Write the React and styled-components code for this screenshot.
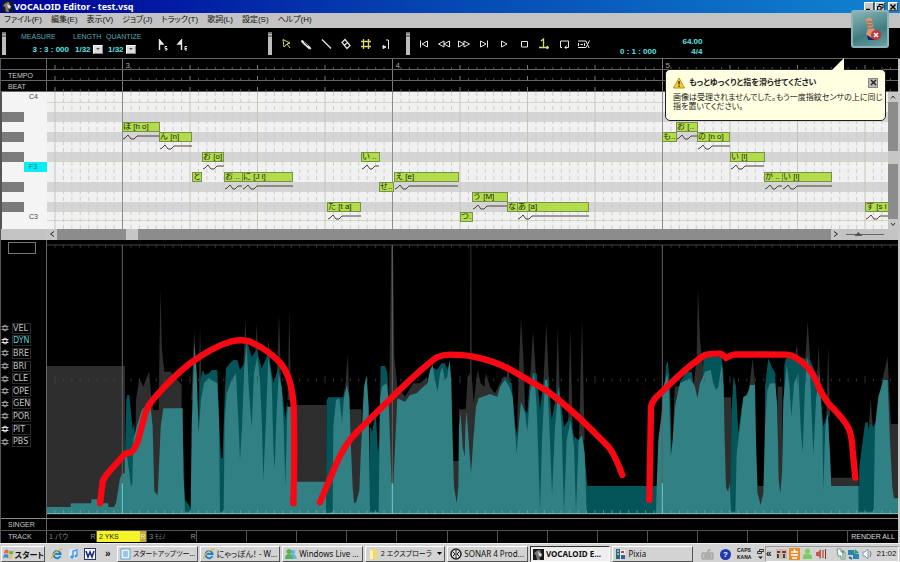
import React, { useState } from "react";
import styled, { createGlobalStyle } from "styled-components";

const CANVAS_LEFT = 47;
const BEAT = 67.5;
const ROW_SHARE = 10 / 137;

const menus = [
  "ファイル(F)",
  "編集(E)",
  "表示(V)",
  "ジョブ(J)",
  "トラック(T)",
  "歌詞(L)",
  "設定(S)",
  "ヘルプ(H)",
];

const params = ["VEL", "DYN", "BRE", "BRI", "CLE", "OPE", "GEN", "POR", "PIT", "PBS"];

// one entry per semitone from C4 down
const keys = [
  { name: "C4" },
  {},
  { black: true },
  {},
  { black: true },
  {},
  { black: true },
  { name: "F3", active: true },
  {},
  { black: true },
  {},
  { black: true },
  { name: "C3" },
  {},
];

const notes = [
  { text: "ほ [h o]", x: 122, w: 38, row: 3, curve: 38 },
  { text: "ん [n]", x: 159, w: 33, row: 4, curve: 33 },
  { text: "と", x: 192, w: 10, row: 8 },
  { text: "お [o]", x: 202, w: 22, row: 6, curve: 22 },
  { text: "お ..", x: 224, w: 19, row: 8, curve: 18 },
  { text: "に [J i]", x: 242, w: 51, row: 8, curve: 51 },
  { text: "た [t a]", x: 327, w: 34, row: 11, curve: 34 },
  { text: "い ..", x: 361, w: 19, row: 6, curve: 18 },
  { text: "せ..", x: 379, w: 15, row: 9 },
  { text: "え [e]", x: 394, w: 65, row: 8, curve: 64 },
  { text: "つ.", x: 460, w: 13, row: 12 },
  { text: "う [M]", x: 472, w: 36, row: 10, curve: 35 },
  { text: "な", x: 507, w: 11, row: 11 },
  { text: "あ [a]", x: 517, w: 72, row: 11, curve: 72 },
  { text: "も..", x: 662, w: 15, row: 4 },
  { text: "お [..", x: 676, w: 22, row: 3, curve: 21 },
  { text: "の [n o]", x: 697, w: 33, row: 4, curve: 33 },
  { text: "い [i]", x: 730, w: 35, row: 6, curve: 34 },
  { text: "が ..", x: 764, w: 19, row: 8, curve: 18 },
  { text: "い [i]", x: 782, w: 50, row: 8, curve: 50 },
  { text: "す [s i", x: 865, w: 34, row: 11, curve: 34 },
];

const ticks = Array.from({ length: 101 }, (_, i) => ({
  x: 55 + (i * BEAT) / 8 - CANVAS_LEFT,
  beat: i % 8 === 0,
  bar: i % 32 === 8,
}));

const bars = [
  { x: 75.5, name: "3" },
  { x: 345.5, name: "4" },
  { x: 615.5, name: "5" },
];

// curve shapes, three units to a pixel
const segments = [
  {
    x: 0,
    gray: [
      "141,820 141,378 375,378 375,820",
      "403,820 408,480 418,415 430,440 447,395 455,480 460,510 476,510 481,150 486,330 493,395 512,395 545,435 545,505 553,690 553,820",
      "574,480 583,270 591,480",
      "594,575 600,258 606,480",
      "728,420 736,240 744,420",
      "762,420 770,250 778,420",
      "798,400 806,300 814,420",
      "830,420 837,225 843,420",
      "863,480 868,212 873,480",
      "880,820 880,495 980,495 980,820",
    ],
    dark: [
      "375,820 375,640 379,480 382,465 388,465 398,570 403,545 412,820",
      "548,820 548,690 556,780 570,800 575,820",
      "590,820 600,430 608,390 615,405 628,400 635,390 652,390 657,540 663,655 668,655 672,520 678,385 690,370 700,360 712,360 720,390 733,370 740,300 755,350 770,330 785,385 805,340 820,430 836,380 850,480 856,540 862,480 866,820",
    ],
    teal: "141,820 141,801 212,801 212,790 274,790 274,778 300,778 300,790 325,790 325,801 342,801 348,790 360,715 367,700 374,700 374,640 380,640 388,700 393,740 397,730 400,600 410,560 425,510 440,495 452,500 458,560 463,755 473,765 476,700 482,560 490,505 548,505 550,700 555,815 572,815 575,560 583,310 590,400 596,575 603,480 612,430 625,415 652,430 657,540 660,815 671,815 674,540 680,460 695,420 708,400 716,560 720,660 726,560 733,380 740,310 746,440 755,565 762,400 772,350 780,420 786,560 790,720 797,560 805,350 815,420 820,620 824,690 828,560 836,400 845,440 851,560 856,740 862,500 888,500 888,725 980,725 980,820",
  },
  {
    x: 870,
    gray: [
      "166,440 173,345 178,470 178,508 215,508 215,820 178,820",
      "290,820 298,440 304,15 309,15 313,350 322,440 345,470 370,430 390,430 412,410 412,820",
      "487,820 487,663 507,663 507,508 527,508 533,410 540,400 541,15 544,15 545,400 551,490 558,430 563,390 572,430 583,440 588,400 600,440 615,460 640,410 650,410 654,350 659,420 670,820",
      "676,820 683,500 688,350 693,235 700,350 706,520 712,820",
      "720,420 729,275 739,420",
      "760,430 769,250 777,430",
      "797,480 803,265 810,480",
      "834,560 841,265 848,560",
      "867,600 876,240 884,600",
    ],
    dark: [
      "108,820 110,480 115,472 160,472 165,440 172,820",
      "236,820 240,560 247,575 252,540 258,530 264,640 268,600 272,378 285,378 292,400 296,480 300,820",
      "415,820 415,420 425,380 440,390 455,370 465,370 472,390 480,365 486,600 490,820",
      "625,820 630,440 645,412 665,430 676,560 685,600 693,485 705,510 712,520 718,440 728,400 740,400 750,510 760,430 775,410 785,540 806,430 822,560 842,530 852,590 866,600 880,600 892,738 960,738 960,820",
    ],
    teal: "110,820 128,815 130,560 138,480 148,475 156,545 162,475 170,435 178,470 182,600 188,740 192,788 198,788 208,750 214,600 222,440 230,405 236,500 240,815 266,815 270,480 275,440 290,430 296,480 300,600 305,730 310,730 316,600 322,475 345,485 360,465 380,460 395,445 412,430 420,390 428,375 435,420 443,455 450,400 457,380 465,420 472,410 479,360 484,430 488,600 492,740 500,790 505,740 507,560 512,520 518,620 524,650 526,560 530,515 536,600 543,700 550,600 558,500 566,475 600,462 622,470 630,440 645,420 658,440 668,470 674,560 680,640 686,560 693,485 705,520 712,575 720,460 732,395 740,500 750,810 756,600 765,420 772,420 780,600 786,765 795,560 806,440 815,560 822,815 830,600 842,540 852,620 858,815 866,600 876,585 884,640 890,820",
  },
  {
    x: 1770,
    gray: [
      "240,820 254,440 312,430 320,350 324,145 330,300 340,390 340,820",
      "402,820 402,472 423,472 423,820",
      "478,440 488,355 496,440",
      "503,820 503,738 522,738 522,820",
      "563,820 563,440 577,440 577,820",
      "612,380 620,312 628,380",
      "645,370 653,245 661,370",
      "680,440 686,315 691,440",
      "709,530 715,318 720,530",
      "724,820 724,713 806,713 806,820",
      "836,570 842,475 849,570",
      "875,430 893,350 896,420 903,552 926,552 926,820 875,820",
    ],
    dark: [
      "0,820 0,738 202,738 202,820",
      "215,820 222,470 228,375 233,362 240,430 248,820",
      "268,820 270,425 290,395 305,395 312,440",
      "330,820 340,360 350,350 395,350 400,400 402,820",
      "421,820 424,520 431,408 438,440 445,580 455,500 475,450 480,820",
      "525,820 525,440 535,355 545,380 556,400 560,820",
      "580,820 583,375 590,350 612,360 625,350 660,360 690,430 700,560 715,510 720,820",
      "806,820 808,680 825,550 833,545 836,570 842,550 850,560 860,540 860,820",
    ],
    teal: "198,820 200,738 205,600 215,520 220,440 232,400 238,470 242,650 248,600 255,500 265,450 270,430 300,415 315,440 322,475 330,430 345,395 362,390 370,430 378,450 385,440 395,370 401,440 404,600 408,740 414,755 420,730 423,815 436,815 440,640 450,560 460,470 472,465 480,435 495,435 498,600 503,760 512,795 520,760 525,560 532,450 540,430 556,430 562,500 566,720 571,760 576,700 580,480 590,375 598,430 604,530 612,430 625,400 632,560 638,640 645,440 652,350 660,400 670,645 678,480 688,400 697,560 700,750 706,560 713,520 720,640 724,738 806,738 806,815 851,815 855,560 865,470 880,420 893,420 900,600 907,740 912,775 926,775 926,820",
  },
];

const phrases = [
  "M300,790 L308,725 Q314,708 330,692 L372,645 Q380,637 392,638 Q402,632 413,605 L436,520 Q442,496 470,466 Q520,410 570,370 Q640,320 695,304 Q720,298 745,303 Q800,325 840,368 Q876,410 881,500 Q885,640 880,790",
  "M960,787 L1005,680 Q1032,615 1070,577 L1180,468 Q1260,390 1310,352 Q1330,344 1350,344 Q1390,344 1420,350 Q1480,362 1530,388 L1640,452 Q1710,504 1770,565 L1827,622 Q1845,645 1867,705",
  "M1948,780 L1953,500 Q1956,485 1970,470 L2020,422 Q2075,370 2115,345 Q2128,340 2162,341 Q2170,344 2178,354 Q2192,344 2205,343 L2360,344 Q2376,345 2392,356 Q2430,380 2450,425 Q2462,460 2490,496 Q2530,535 2546,565 Q2556,590 2558,630 L2566,713",
];

const tasks = [
  { icon: "doc", text: "スタートアップツー...", small: true },
  { icon: "ie", text: "にゃっぽん！ - W..." },
  { icon: "people", text: "Windows Live ..." },
  { icon: "folder", text: "2 エクスプローラ", more: true, small: true },
  { icon: "sonar", text: "SONAR 4 Prod..." },
  { icon: "voc", text: "VOCALOID E...", active: true },
  { icon: "pixia", text: "Pixia" },
];

const GlobalStyle = createGlobalStyle`
  * {
    box-sizing: border-box;
  }
  body {
    margin: 0;
    background: #000;
    font-family: "Liberation Sans", "Noto Sans CJK JP", sans-serif;
    font-size: 8px;
  }
  button, select, input {
    margin: 0;
    padding: 0;
    border: 0;
    border-radius: 0;
    background: none;
    font: inherit;
    color: inherit;
  }
`;

const Icon = ({ name }) => {
  switch (name) {
    case "voc":
      return (
        <svg width="11" height="11" viewBox="0 0 11 11">
          <rect width="11" height="11" fill="#181818" />
          <path d="M1 5 Q3 1 7 1 L8 4 L6 5 L7 11 H4 L3 6 Z" fill="#777" />
          <path d="M5 3 L9 5 L8 8 L6 7Z" fill="#d8d8d8" />
        </svg>
      );
    case "ie":
      return (
        <svg width="12" height="12" viewBox="0 0 12 12">
          <path d="M9.4 8 A3.6 3.6 0 1 1 9.6 6 H3" fill="none" stroke="#1c86c8" strokeWidth="2" />
          <path d="M1 11 Q0 8 5 4 Q10 0 11.500 1.500" fill="none" stroke="#e4b93c" strokeWidth="1.200" />
        </svg>
      );
    case "doc":
      return (
        <svg width="11" height="12" viewBox="0 0 11 12">
          <rect x="1" y="1" width="9" height="10" fill="#e8f4fc" stroke="#6aa5d0" />
          <path d="M3 4H8M3 6H8M3 8H8" stroke="#5c96c8" />
        </svg>
      );
    case "people":
      return (
        <svg width="12" height="12" viewBox="0 0 12 12">
          <circle cx="8" cy="4" r="2.300" fill="#68b5e0" />
          <path d="M5 11Q5 6 8 6T12 11Z" fill="#68b5e0" />
          <circle cx="4" cy="3.500" r="2.500" fill="#55b060" />
          <path d="M0 11Q0 6 4 6T8 11Z" fill="#55b060" />
        </svg>
      );
    case "folder":
      return (
        <svg width="11" height="12" viewBox="0 0 11 12">
          <path d="M2 1H7L9 3V11H2Z" fill="#f4d868" />
          <path d="M2 1V11L5 11V3Z" fill="#fff3ab" />
        </svg>
      );
    case "sonar":
      return (
        <svg width="12" height="12" viewBox="0 0 12 12">
          <circle cx="6" cy="6" r="5" fill="#ddd" stroke="#222" strokeWidth="1.500" />
          <path d="M6 2V10M3 4L5 6L3 8M9 4L7 6L9 8" fill="none" stroke="#222" />
        </svg>
      );
    case "pixia":
      return (
        <svg width="11" height="12" viewBox="0 0 11 12">
          <path d="M1 1H5V11H1Z" fill="#256c78" />
          <path d="M5 2H10V10H5Z" fill="#f0eee8" />
          <path d="M6 3H9V5H6Z" fill="#b54848" />
          <path d="M6 7H10V11H6Z" fill="#365ca0" />
          <path d="M2 3H4M2 6H4" stroke="#fff" />
        </svg>
      );
    case "note":
      return (
        <svg width="11" height="12" viewBox="0 0 11 12">
          <rect x="1" y="1" width="9" height="10" rx="2" fill="#dcecf8" />
          <path d="M5 9V3L9 2V8" fill="none" stroke="#4c9ae0" strokeWidth="1.500" />
          <circle cx="4" cy="9" r="1.800" fill="#4c9ae0" />
          <circle cx="8" cy="8" r="1.500" fill="#4c9ae0" />
        </svg>
      );
    case "word":
      return (
        <svg width="12" height="12" viewBox="0 0 12 12">
          <rect x="0.500" y="0.500" width="11" height="11" fill="#fff" stroke="#243478" />
          <path d="M2 3L4 9L6 4L8 9L10 3" fill="none" stroke="#182a80" strokeWidth="1.600" />
        </svg>
      );
    default:
      return null;
  }
};

const Glyph = ({ children, color = "#e8e8e8" }) => (
  <svg width="14" height="12" viewBox="0 0 14 12" fill="none" stroke={color}>
    {children}
  </svg>
);

const tools = [
  ["矢印", <Glyph color="#d9d970"><path d="M4 1.500L11 5L8 6L11 10M4 1.500L5 9L8 6" /></Glyph>],
  ["鉛筆", <Glyph><path d="M3 2L11 9L12 11L9.500 10.500L2.500 4Z" fill="#e8e8e8" strokeWidth="0.800" /><path d="M5 4L9 8" stroke="#555" /></Glyph>],
  ["直線", <Glyph><path d="M3 1.500L12 10.500" strokeWidth="1.200" /></Glyph>],
  ["消しゴム", <Glyph><path d="M3 4.500L6 1.500L11 7.500L8 10.500ZM5.500 7L9 4.500" strokeWidth="1.200" /></Glyph>],
  ["グリッド", <Glyph color="#d9d970"><path d="M4.500 1V11M9.500 1V11M2 3.500H12M2 8.500H12" strokeWidth="1.300" /></Glyph>],
  ["音符", <Glyph><path d="M7 2H9.500V11" /><path d="M4 7.500L7 9L4 10.500Z" fill="#e8e8e8" /></Glyph>],
];

const transport = [
  ["先頭", <Glyph><path d="M3.500 2.500V9.500M10.500 3V9L5 6Z" /></Glyph>],
  ["巻き戻し", <Glyph><path d="M7 3V9L1.500 6ZM12.500 3V9L7 6Z" /></Glyph>],
  ["早送り", <Glyph><path d="M1.500 3V9L7 6ZM7 3V9L12.500 6Z" /></Glyph>],
  ["末尾", <Glyph><path d="M10.500 2.500V9.500M3.500 3V9L9 6Z" /></Glyph>],
  ["再生", <Glyph><path d="M4.500 3V9L10 6Z" /></Glyph>],
  ["停止", <Glyph><path d="M4.500 3.500H10.500V9H4.500Z" /></Glyph>],
  ["追従", <Glyph color="#d9d970"><path d="M4 3L6.500 1V10M2 9.500H11" strokeWidth="1.300" /><path d="M10 8L12 9.500L10 11Z" fill="#d9d970" /></Glyph>],
  ["ループ", <Glyph><path d="M5 9.500H3.500V3H11.500V9.500H8M9.500 7.500L8 9.500L9.500 11" /></Glyph>],
  ["範囲", <Glyph><path d="M1 3H9L12 10M1 9.500H9L12.500 2.500M1.500 5V8M3.500 6.500H6M7.500 5V8" /></Glyph>],
];

export default function App() {
  const [param, setParam] = useState("DYN");
  const [balloon, setBalloon] = useState(true);

  return (
    <>
      <GlobalStyle />
      <Page>
        <TitleBar>
          <Icon name="voc" />
          <Title>VOCALOID Editor - test.vsq</Title>
          <WindowButton type="button" aria-label="最小化">
            <svg width="8" height="8"><path d="M1 6.500H5" stroke="#000" strokeWidth="1.500" /></svg>
          </WindowButton>
          <WindowButton type="button" aria-label="元に戻す">
            <svg width="8" height="8"><path d="M3 3V1.500H7V5H5M1.500 3.500H5V7H1.500Z" fill="none" stroke="#000" /></svg>
          </WindowButton>
          <WindowButton type="button" aria-label="閉じる" $spaced>
            <svg width="8" height="8"><path d="M1.500 1.500L6.500 6.500M6.500 1.500L1.500 6.500" stroke="#000" strokeWidth="1.500" /></svg>
          </WindowButton>
        </TitleBar>

        <MenuBar>
          {menus.map((menu) => (
            <MenuItem type="button" key={menu}>
              {menu}
            </MenuItem>
          ))}
        </MenuBar>

        <Toolbar>
          <Handle />
          <PositionPanel>
            <Field $width={52}>
              <Caption>MEASURE</Caption>
              <Digits>3 : 3 : 000</Digits>
            </Field>
            <Field as="label" $width={33}>
              <Caption>LENGTH</Caption>
              <Combo />
            </Field>
            <Field as="label" $width={35}>
              <Caption>QUANTIZE</Caption>
              <Combo />
            </Field>
            <FlagButtons>
              <ToolButton type="button" aria-label="開始位置">
                <Glyph><path d="M4.500 11V1L8 5H5" fill="#fff" strokeWidth="1.400" /><path d="M12 7.500H10V9.500H12V11H10" /></Glyph>
              </ToolButton>
              <ToolButton type="button" aria-label="終了位置">
                <Glyph><path d="M6.500 11V1L3 5H6" fill="#fff" strokeWidth="1.400" /><path d="M12 11H10V7.500H12M10 9.500H12" /></Glyph>
              </ToolButton>
            </FlagButtons>
          </PositionPanel>
          <Handle />
          <ToolGroup $width={134}>
            {tools.map(([label, glyph]) => (
              <ToolButton type="button" key={label} aria-label={label}>
                {glyph}
              </ToolButton>
            ))}
          </ToolGroup>
          <Handle />
          <ToolGroup $width={210}>
            {transport.map(([label, glyph]) => (
              <ToolButton type="button" key={label} aria-label={label}>
                {glyph}
              </ToolButton>
            ))}
          </ToolGroup>
          <Readout>0 : 1 : 000</Readout>
          <Tempo>
            <span>64.00</span>
            <span>4/4</span>
          </Tempo>
        </Toolbar>

        <Editor>
          <Ruler label="" numbers />
          <Ruler label="TEMPO" />
          <Ruler label="BEAT" />

          <Roll>
            <Keyboard>
              {keys.map((key, i) => (
                <Key key={i}>
                  <KeyFront $black={key.black} />
                  <KeyName $active={key.active}>{key.name}</KeyName>
                </Key>
              ))}
            </Keyboard>
            <Canvas>
              <Lanes>
                {keys.map((key, i) => (
                  <Lane key={i} $black={key.black} />
                ))}
              </Lanes>
              <CanvasDrawing>
                <path d="M0 10H842M0 69H842M0 128H842" transform="translate(0 0.500)" stroke="#d3d6c0" />
                {ticks.map((t) => (
                  <line
                    key={t.x}
                    x1={t.x}
                    x2={t.x}
                    y1="0"
                    y2="137"
                    stroke={t.bar ? "#8d8d8d" : t.beat ? "#c4c7b6" : "#cecece"}
                    strokeDasharray={t.beat ? "none" : "4 3"}
                  />
                ))}
              </CanvasDrawing>
              {notes.map((note) => (
                <NoteSlot key={note.x} $x={note.x - CANVAS_LEFT} $row={note.row}>
                  <Note type="button" $width={note.w}>
                    {note.text}
                  </Note>
                  {note.curve && (
                    <svg width={note.curve} height="9" viewBox={`0 0 ${note.curve} 9`}>
                      <path
                        d={
                          note.curve < 20
                            ? `M1 7L3 6L6 3L9 7H11L14 4H${note.curve}`
                            : `M1 7L3 6L6 3L9 7H12L15 4H${note.curve}`
                        }
                        fill="none"
                        stroke="#4c4038"
                      />
                    </svg>
                  )}
                </NoteSlot>
              ))}
            </Canvas>
            <VerticalScroll>
              <ScrollButton type="button" aria-label="上へ">
                <svg width="8" height="8"><path d="M2 5.500L4 3L6 5.500" fill="none" stroke="#333" /></svg>
              </ScrollButton>
              <VerticalTrack>
                <VerticalThumb />
              </VerticalTrack>
              <ScrollButton type="button" aria-label="下へ">
                <svg width="8" height="8"><path d="M2 3L4 5.500L6 3" fill="none" stroke="#333" /></svg>
              </ScrollButton>
            </VerticalScroll>
          </Roll>

          <HorizontalScroll>
            <ScrollButton type="button" aria-label="左へ">
              <svg width="8" height="8"><path d="M6 1.500L2.500 4L6 6.500" fill="none" stroke="#222" /></svg>
            </ScrollButton>
            <HorizontalTrack>
              <HorizontalThumb />
            </HorizontalTrack>
            <ScrollButton type="button" aria-label="右へ">
              <svg width="8" height="8"><path d="M2 1.500L5.500 4L2 6.500" fill="none" stroke="#222" /></svg>
            </ScrollButton>
            <Zoom type="range" aria-label="ズーム" defaultValue="28" />
          </HorizontalScroll>

          <Control>
            <ParamColumn>
              <ValueBox />
              <ParamList>
                {params.map((name) => (
                  <ParamRow key={name}>
                    <svg width="8" height="8" fill="none" stroke={name === "DYN" || name === "PIT" ? "#ddd" : "#999"}>
                      <path d="M0.500 2.500H7.500M0.500 5.500H7.500" />
                      <ellipse cx="4" cy="4" rx="2" ry="3" />
                    </svg>
                    <ParamButton type="button" $active={param === name} onClick={() => setParam(name)}>
                      {name}
                    </ParamButton>
                  </ParamRow>
                ))}
              </ParamList>
            </ParamColumn>
            <ControlChart />
          </Control>

          <SingerRow>
            <RowLabel>SINGER</RowLabel>
          </SingerRow>
          <TrackRow>
            <RowLabel>TRACK</RowLabel>
            <Tracks>
              <Track type="button">1 パウ<b>R</b></Track>
              <Track type="button" $active>2 YKS<b>R</b></Track>
              <Track type="button">3 ﾓﾐﾉ<b>R</b></Track>
              {Array.from({ length: 13 }, (_, i) => (
                <Track type="button" key={i} aria-label={`トラック ${i + 4}`} />
              ))}
            </Tracks>
            <RenderAll type="button">RENDER ALL</RenderAll>
          </TrackRow>
        </Editor>

        <Taskbar>
          <StartButton type="button">
            <svg width="12" height="12" viewBox="0 0 12 12">
              <path d="M2 2Q4 0 6 2V6Q4 4 1 6Z" fill="#e06a38" />
              <path d="M7 2Q9 4 12 2L11 6Q9 7 7 6Z" fill="#68b040" />
              <path d="M1 7Q4 5 6 7V11Q3 9 0 11Z" fill="#4888d8" />
              <path d="M7 7Q9 8 11 7L10 11Q8 12 7 11Z" fill="#ecc440" />
            </svg>
            スタート
          </StartButton>
          <QuickLaunch>
            <Icon name="ie" />
            <Icon name="note" />
            <Icon name="word" />
            <span>»</span>
          </QuickLaunch>
          <TaskList>
            {tasks.map((task) => (
              <Task type="button" key={task.text} $active={task.active} $small={task.small}>
                <Icon name={task.icon} />
                <span>{task.text}</span>
                {task.more && <svg width="5" height="4"><path d="M0 0H5L2.500 3Z" /></svg>}
              </Task>
            ))}
          </TaskList>
          <LanguageBar>
            <svg width="13" height="12" viewBox="0 0 13 12">
              <path d="M1 5H12V11H1ZM3 7H10M3 9H10M7 5V2H10" fill="#c4c4c4" stroke="#999" />
            </svg>
            <Help>?</Help>
            <CapsKana>
              <span>CAPS</span>
              <span>KANA</span>
            </CapsKana>
            <svg width="7" height="12" viewBox="0 0 7 12">
              <path d="M2.500 3.500V1.500H6.500V3.500ZM0.500 3.500H4.500V5.500H0.500Z" fill="none" stroke="#333" />
              <path d="M1 8.500H6L3.500 11Z" fill="#222" />
            </svg>
          </LanguageBar>
          <Tray>
            <Chevrons>«</Chevrons>
            <svg width="11" height="12" viewBox="0 0 11 12">
              <rect y="1" width="11" height="10" fill="#cbb8ae" />
              <path d="M1 3H4V5H1ZM6 3H10V5H6Z" fill="#8a3030" />
              <path d="M2 6V10M8 6V10" stroke="#444" strokeWidth="2" />
            </svg>
            <svg width="11" height="12" viewBox="0 0 11 12">
              <rect width="11" height="12" fill="#ec8a28" />
              <path d="M2 4H9M5.500 1V5M2 7H9M3 10H8" stroke="#fff" strokeWidth="1.500" />
            </svg>
            <svg width="11" height="12" viewBox="0 0 11 12">
              <circle cx="5.500" cy="3" r="2.500" fill="#80cc60" />
              <path d="M1 11Q0 5 5.500 5.500T10 11Z" fill="#80cc60" />
            </svg>
            <svg width="12" height="12" viewBox="0 0 12 12">
              <path d="M1 4H3L6 1V11L3 8H1Z" fill="#c85848" />
              <path d="M8 2V10M10.500 1V11" stroke="#8c3028" />
            </svg>
            <Gap />
            <svg width="10" height="12" viewBox="0 0 10 12">
              <path d="M1 1H5V4H9V11H5V8H2Z" fill="#f8fff8" stroke="#6a9a80" />
              <path d="M7 2V10" stroke="#208858" />
            </svg>
            <svg width="12" height="12" viewBox="0 0 12 12">
              <path d="M0 2H6V7H0ZM5 6H11V11H5Z" fill="#2b83b0" />
              <path d="M7 1L11 5L6 6Z" fill="#1ba070" />
              <path d="M1 9L4 11" stroke="#186890" strokeWidth="2" />
            </svg>
            <svg width="11" height="12" viewBox="0 0 11 12">
              <path d="M1 4H3L6 1V11L3 8H1Z" fill="#fafafa" stroke="#80a0b0" />
              <path d="M8 3Q10 6 8 9" fill="none" stroke="#608090" />
            </svg>
            <Clock>21:02</Clock>
          </Tray>
        </Taskbar>

        <FingerButton type="button" aria-label="指紋センサ">
          <svg width="30" height="30" viewBox="0 0 30 30">
            <path d="M11 5Q14 2 17 5L18 14L21 17L19 24L14 25L11 20L13 15Z" fill="#d29a72" />
            <path d="M12 8H17M12 11H17M13 14H18" stroke="#8e5840" />
            <path d="M12 21L20 26H13Z" fill="#20265c" />
            <circle cx="21" cy="21" r="5" fill="#c43438" />
            <path d="M19 19L23 23M23 19L19 23" stroke="#fff" strokeWidth="1.600" />
          </svg>
        </FingerButton>

        {balloon && (
          <Balloon role="status">
            <BalloonTail width="13" height="13" viewBox="0 0 13 13">
              <path d="M0 12L12 0V13H0Z" fill="#ffffe1" />
            </BalloonTail>
            <BalloonHead>
              <svg width="12" height="12" viewBox="0 0 12 12">
                <path d="M6 1L11.500 11H0.500Z" fill="#f8cc30" stroke="#c09018" />
                <path d="M6 4V7.500M6 8.500V10" stroke="#222" strokeWidth="1.300" />
              </svg>
              <strong>もっとゆっくりと指を滑らせてください</strong>
              <BalloonClose type="button" aria-label="閉じる" onClick={() => setBalloon(false)}>
                <svg width="7" height="7"><path d="M1 1L6 6M6 1L1 6" stroke="#222" strokeWidth="1.400" /></svg>
              </BalloonClose>
            </BalloonHead>
            <BalloonText>
              画像は受理されませんでした。もう一度指紋センサの上に同じ
              <br />
              指を置いてください。
            </BalloonText>
          </Balloon>
        )}
      </Page>
    </>
  );
}

const Combo = () => (
  <ComboBox>
    <select defaultValue="1/32">
      <option>1/8</option>
      <option>1/16</option>
      <option>1/32</option>
    </select>
    <ComboArrow>
      <svg width="4" height="3"><path d="M0 0H4L2 2Z" fill="#555" /></svg>
    </ComboArrow>
  </ComboBox>
);

const Ruler = ({ label, numbers }) => (
  <RulerRow>
    <RowLabel>{label}</RowLabel>
    <RulerScale>
      <svg width="100%" height="10">
        {ticks.map((t) => (
          <line
            key={t.x}
            x1={t.x}
            x2={t.x}
            y1={t.bar ? 0 : t.beat ? 6 : 8}
            y2="11"
            stroke={t.bar || t.beat ? "#7a7a7a" : "#505050"}
          />
        ))}
        {numbers &&
          bars.map((bar) => (
            <text key={bar.name} x={bar.x + 3} y="9" fontSize="8" fill="#a8a8a8">
              {bar.name}
            </text>
          ))}
      </svg>
    </RulerScale>
  </RulerRow>
);

const ControlChart = () => (
  <ChartSvg viewBox="141 0 2553 834" preserveAspectRatio="none">
    {segments.map((s) => (
      <g key={s.x} transform={`translate(${s.x} 0)`}>
        {s.gray.map((points) => (
          <polygon key={points} points={points} fill="#2e2e2e" />
        ))}
        {s.dark.map((points) => (
          <polygon key={points} points={points} fill="#04555a" />
        ))}
        <polygon points={s.teal} fill="#318083" />
      </g>
    ))}
    <path d="M141 15H2694" stroke="#444" strokeWidth="3" />
    {ticks.map((t) => {
      const x = (t.x + CANVAS_LEFT) * 3;
      return (
        <g key={x} stroke="#484848" strokeWidth="2">
          <path d={`M${x} 15V25M${x} ${t.beat ? 408 : 415}V${t.beat ? 430 : 424}`} />
          <path d={`M${x} 811V820`} stroke="#76b8ba" />
        </g>
      );
    })}
    {[367, 1177, 1987].map((x) => (
      <g key={x} strokeWidth="3">
        <path d={`M${x} 15V730`} stroke="#626262" />
        <path d={`M${x} 730V820`} stroke="#70c8ca" />
      </g>
    ))}
    <path d="M141 821H2694" stroke="#8ccaca" strokeWidth="3" />
    {phrases.map((d) => (
      <path key={d} d={d} fill="none" stroke="#f90814" strokeWidth="19" strokeLinecap="round" strokeLinejoin="round" />
    ))}
  </ChartSvg>
);

const Page = styled.div`
  position: relative;
  display: flex;
  flex-direction: column;
  min-height: 100vh;
  overflow: hidden;
  background: #000;
`;

const TitleBar = styled.header`
  display: flex;
  align-items: center;
  height: 13px;
  padding: 0 2px;
  background: linear-gradient(90deg, #00009a, #0442b0 45%, #1084d0);
  color: #fff;
`;

const Title = styled.h1`
  flex: 1;
  margin: 0 0 0 1px;
  font-family: "Noto Sans", sans-serif;
  font-size: 9px;
  line-height: 13px;
`;

const WindowButton = styled.button`
  display: flex;
  align-items: center;
  justify-content: center;
  width: 10px;
  height: 9px;
  margin-left: ${(p) => (p.$spaced ? "3px" : "1px")};
  background: #c8c8c8;
  border: 1px solid;
  border-color: #fff #444 #444 #fff;
`;

const MenuBar = styled.nav`
  display: flex;
  align-items: center;
  gap: 9px;
  height: 15px;
  padding: 0 4px 2px;
  background: #c3c3c3;
`;

const MenuItem = styled.button`
  font-size: 8px;
  line-height: 12px;
  color: #111;
  font-feature-settings: "palt";
  white-space: nowrap;
`;

const Toolbar = styled.div`
  display: flex;
  height: 31px;
  padding: 4px 2px 1px;
  border-bottom: 1px solid #666;
  color: #5fe0e4;
`;

const Handle = styled.div`
  flex: none;
  width: 4px;
  margin-bottom: 2px;
  background: #bdbdbd;
  border-top: 5px double #777;
`;

const PositionPanel = styled.div`
  display: flex;
  flex: none;
  width: 262px;
  padding-left: 15px;
`;

const Field = styled.div`
  display: flex;
  flex-direction: column;
  width: ${(p) => p.$width}px;
`;

const Caption = styled.span`
  font-size: 7px;
  line-height: 10px;
  color: #58a9b4;
  white-space: nowrap;
`;

const Digits = styled.span`
  padding-right: 4px;
  font-size: 8px;
  font-weight: bold;
  line-height: 15px;
  text-align: right;
  white-space: nowrap;
`;

const ComboBox = styled.span`
  position: relative;
  display: block;
  width: 30px;
  height: 15px;

  select {
    width: 30px;
    height: 15px;
    padding-left: 2px;
    appearance: none;
    font-size: 8px;
    font-weight: bold;
    line-height: 15px;
  }
`;

const ComboArrow = styled.span`
  position: absolute;
  top: 3px;
  right: 0;
  display: flex;
  align-items: center;
  justify-content: center;
  width: 10px;
  height: 9px;
  background: #dcdcdc;
  border: 1px solid;
  border-color: #fff #888 #888 #fff;
  pointer-events: none;
`;

const FlagButtons = styled.div`
  display: flex;
  align-items: center;
  padding-left: 11px;
`;

const ToolGroup = styled.div`
  display: flex;
  flex: none;
  align-items: center;
  width: ${(p) => p.$width}px;
  padding: 0 0 2px 4px;
`;

const ToolButton = styled.button`
  display: flex;
  align-items: center;
  justify-content: center;
  width: 20px;
  height: 20px;
`;

const Readout = styled.span`
  align-self: flex-end;
  font-size: 8px;
  font-weight: bold;
  line-height: 10px;
  white-space: nowrap;
`;

const Tempo = styled.div`
  display: flex;
  flex-direction: column;
  justify-content: flex-end;
  width: 46px;
  font-size: 8px;
  font-weight: bold;
  line-height: 10px;
  text-align: right;
`;

const Editor = styled.main`
  display: flex;
  flex: 1;
  flex-direction: column;
  border-right: 2px solid #c8c8c8;
  border-left: 1px solid #555;
`;

const RowLabel = styled.div`
  flex: none;
  width: 46px;
  padding-left: 7px;
  border-right: 1px solid #666;
  font-size: 7px;
  line-height: 11px;
  color: #c8c8c8;
`;

const RulerRow = styled.div`
  display: flex;
  height: 11px;
  border-bottom: 1px solid #666;
`;

const RulerScale = styled.div`
  flex: 1;
  overflow: hidden;

  svg {
    display: block;
  }
`;

const Roll = styled.section`
  display: flex;
  height: 137px;
`;

const lanes = `
  display: grid;
  grid-template-rows: repeat(13, 10fr) 7fr;
`;

const Keyboard = styled.div`
  ${lanes}
  flex: none;
  width: 46px;
  background: #f4f4f4;
  border-left: 1px solid #555;
`;

const Key = styled.div`
  display: flex;
  min-height: 0;
`;

const KeyFront = styled.div`
  width: 22px;
  background: ${(p) => (p.$black ? "#7b7b7b" : "transparent")};
`;

const KeyName = styled.div`
  flex: 1;
  padding-left: 5px;
  background: ${(p) => (p.$active ? "#0cecf4" : "transparent")};
  font-size: 7px;
  line-height: 9px;
  color: ${(p) => (p.$active ? "#25808c" : "#444")};
`;

const Canvas = styled.div`
  position: relative;
  flex: 1;
  min-width: 0;
  overflow: hidden;
`;

const Lanes = styled.div`
  ${lanes}
  height: 100%;
`;

const Lane = styled.div`
  background: ${(p) => (p.$black ? "#d5d5d5" : "#f1f1f1")};
`;

const CanvasDrawing = styled.svg`
  position: absolute;
  inset: 0;
  width: 100%;
  height: 100%;
`;

const NoteSlot = styled.div`
  position: absolute;
  top: ${(p) => p.$row * ROW_SHARE * 100}%;
  left: ${(p) => p.$x}px;

  svg {
    display: block;
  }
`;

const Note = styled.button`
  display: block;
  width: ${(p) => p.$width}px;
  height: 10px;
  overflow: hidden;
  background: #b2dc4c;
  border: 1px solid #75914a;
  font-size: 8px;
  line-height: 8px;
  color: #1c2810;
  text-align: left;
  white-space: nowrap;
`;

const VerticalScroll = styled.div`
  display: flex;
  flex: none;
  flex-direction: column;
  width: 10px;
  background: #8c8c8c;
`;

const ScrollButton = styled.button`
  display: flex;
  flex: none;
  align-items: center;
  justify-content: center;
  width: 10px;
  height: 10px;
  background: #c6c6c6;
`;

const VerticalTrack = styled.div`
  flex: 1;
  padding-top: 49px;
`;

const VerticalThumb = styled.div`
  height: 13px;
  background: #c6c6c6;
`;

const HorizontalScroll = styled.div`
  display: flex;
  height: 11px;
  padding-left: 46px;
  background: #c3c3c3;
`;

const HorizontalTrack = styled.div`
  flex: 1;
  padding-left: 69px;
  background: #8c8c8c;
`;

const HorizontalThumb = styled.div`
  width: 12px;
  height: 11px;
  background: #c6c6c6;
`;

const Zoom = styled.input`
  width: 57px;
  height: 11px;
  padding: 0 14px 0 5px;
  appearance: none;

  &::-webkit-slider-runnable-track {
    height: 1px;
    background: #666;
  }
  &::-webkit-slider-thumb {
    width: 8px;
    height: 4px;
    margin-top: -2px;
    appearance: none;
    background: #555;
    clip-path: polygon(50% 0, 100% 100%, 0 100%);
  }
`;

const Control = styled.section`
  display: flex;
  flex: 1;
  min-height: 278px;
`;

const ParamColumn = styled.div`
  flex: none;
  width: 46px;
  border-right: 1px solid #666;
`;

const ValueBox = styled.div`
  width: 28px;
  height: 12px;
  margin: 2px 0 68px 7px;
  border: 1px solid #777;
`;

const ParamList = styled.div`
  display: grid;
  grid-template-rows: repeat(10, 1fr);
  height: 126px;
`;

const ParamRow = styled.div`
  display: flex;
  align-items: center;
  gap: 3px;
`;

const ParamButton = styled.button`
  width: 19px;
  height: 11px;
  border: 1px solid #2c2c2c;
  font-family: "DejaVu Sans", sans-serif;
  font-size: 8px;
  line-height: 9px;
  color: ${(p) => (p.$active ? "#5cc8c8" : "#c4c4c4")};
  text-align: left;
`;

const ChartSvg = styled.svg`
  flex: 1;
  min-width: 0;
  height: auto;
  align-self: stretch;
`;

const SingerRow = styled.div`
  display: flex;
  height: 12px;
  border-top: 1px solid #888;
`;

const TrackRow = styled.div`
  display: flex;
  height: 13px;
  border-top: 1px solid #555;
`;

const Tracks = styled.div`
  display: grid;
  flex: 1;
  grid-template-columns: repeat(16, 1fr);
`;

const Track = styled.button`
  display: flex;
  justify-content: space-between;
  min-width: 0;
  height: 11px;
  padding-left: 2px;
  background: ${(p) => (p.$active ? "#f4f428" : "transparent")};
  border-right: 1px solid #555;
  font-size: 7px;
  line-height: 11px;
  color: ${(p) => (p.$active ? "#222" : "#888")};

  b {
    width: 6px;
    background: ${(p) => (p.$active ? "#c4a840" : "transparent")};
    font-weight: normal;
    color: ${(p) => (p.$active ? "#f4ecb0" : "#999")};
  }
`;

const RenderAll = styled.button`
  width: 50px;
  height: 11px;
  font-size: 7px;
  line-height: 11px;
  color: #ddd;
  white-space: nowrap;
`;

const Taskbar = styled.footer`
  display: flex;
  align-items: center;
  height: 20px;
  padding: 2px 1px 1px;
  background: #d3d3d3;
  border-top: 1px solid #eee;
  color: #111;
`;

const bevel = `
  border: 1px solid;
  border-color: #fff #555 #555 #fff;
`;

const StartButton = styled.button`
  ${bevel}
  display: flex;
  flex: none;
  align-items: center;
  gap: 1px;
  width: 44px;
  height: 16px;
  padding-left: 1px;
  font-feature-settings: "palt";
  font-weight: bold;
  white-space: nowrap;
`;

const QuickLaunch = styled.div`
  display: flex;
  flex: none;
  align-items: center;
  gap: 5px;
  width: 72px;
  padding-left: 6px;

  span {
    margin-left: 4px;
    font-size: 10px;
    font-weight: bold;
    line-height: 12px;
  }
`;

const TaskList = styled.div`
  display: flex;
  flex: 1;
  gap: 2px;
  min-width: 0;
`;

const Task = styled.button`
  ${bevel}
  display: flex;
  flex: 1 1 0;
  align-items: center;
  gap: 2px;
  min-width: 0;
  height: 16px;
  padding: 0 2px;
  background: ${(p) => (p.$active ? "#eee" : "transparent")};
  border-color: ${(p) => (p.$active ? "#333 #fff #fff #333" : "#fff #555 #555 #fff")};
  font-feature-settings: "palt";
  font-family: "Noto Sans", "Noto Sans CJK JP", sans-serif;
  font-size: ${(p) => (p.$small ? "7px" : "8px")};
  font-weight: ${(p) => (p.$active ? "bold" : "normal")};
  line-height: 12px;
  white-space: nowrap;

  svg {
    flex: none;
  }
  span {
    flex: 1;
    overflow: hidden;
    text-align: left;
  }
`;

const LanguageBar = styled.div`
  display: flex;
  flex: none;
  align-items: center;
  gap: 6px;
  width: 72px;
  padding-left: 8px;
`;

const Help = styled.span`
  width: 11px;
  height: 11px;
  background: #2038b0;
  border-radius: 50%;
  font-size: 8px;
  font-weight: bold;
  line-height: 11px;
  color: #fff;
  text-align: center;
`;

const CapsKana = styled.span`
  display: flex;
  flex-direction: column;
  width: 14px;
  font-size: 5px;
  font-weight: bold;
  line-height: 7px;
`;

const Tray = styled.div`
  display: flex;
  flex: none;
  align-items: center;
  gap: 2px;
  width: 134px;
  height: 16px;
  border: 1px solid;
  border-color: #999 #fff #fff #999;
`;

const Chevrons = styled.span`
  width: 8px;
  font-size: 10px;
  font-weight: bold;
  line-height: 12px;
`;

const Gap = styled.span`
  width: 5px;
`;

const Clock = styled.time`
  flex: 1;
  font-size: 8px;
  line-height: 12px;
  text-align: center;
`;

const FingerButton = styled.button`
  position: absolute;
  top: 10px;
  right: 11px;
  display: flex;
  align-items: center;
  justify-content: center;
  width: 38px;
  height: 38px;
  background: linear-gradient(160deg, #8ab4b8, #3f7c80 60%, #6aa0a4);
  border: 2px solid #8fb4b8;
  border-radius: 3px;
`;

const Balloon = styled.aside`
  position: absolute;
  top: 69px;
  right: 14px;
  width: 221px;
  height: 52px;
  padding: 6px 7px;
  background: #ffffe1;
  border: 1px solid #222;
  border-radius: 5px;
  color: #222;
  font-feature-settings: "palt";
`;

const BalloonTail = styled.svg`
  position: absolute;
  top: -12px;
  right: 40px;
`;

const BalloonHead = styled.div`
  display: flex;
  align-items: center;
  gap: 4px;
  height: 13px;
  line-height: 12px;

  strong {
    flex: 1;
    white-space: nowrap;
  }
`;

const BalloonClose = styled.button`
  display: flex;
  align-items: center;
  justify-content: center;
  width: 10px;
  height: 10px;
  background: #b8b8b8;
  border: 1px solid #888;
`;

const BalloonText = styled.p`
  margin: 4px 0 0;
  font-size: 8px;
  line-height: 9px;
  white-space: nowrap;
`;
